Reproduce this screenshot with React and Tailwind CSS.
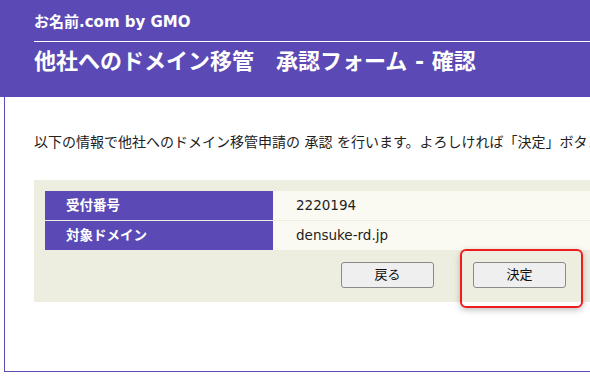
import React from 'react';

const font = { fontFamily: '"DejaVu Sans", "Noto Sans CJK JP", sans-serif' };

const rows = [
  { label: '受付番号', value: '2220194' },
  { label: '対象ドメイン', value: 'densuke-rd.jp' },
];

const App = () => {
  return (
    <div className="w-[590px] h-[381px] overflow-hidden bg-white" style={font}>
      <div className="w-[900px]">
        {/* Header */}
        <div className="h-[97px] bg-[#5b4ab5] pl-[34px] text-white">
          <div className="pt-[12px] pb-[9px] text-[15px] leading-[20px] font-bold">お名前.com by GMO</div>
          <div className="border-t border-white"></div>
          <h1 className="mt-[5px] text-[22px] leading-[30px] font-bold whitespace-nowrap">
            他社へのドメイン移管　承認フォーム - 確認
          </h1>
        </div>

        {/* Body */}
        <div className="ml-[4px] h-[275px] border-l border-b border-[#5b4ab5] pl-[29px]">
          <p className="pt-[35px] text-[14px] leading-[20px] text-[#222] whitespace-nowrap">
            以下の情報で他社へのドメイン移管申請の 承認 を行います。よろしければ「決定」ボタンを押してください。
          </p>

          <div className="mt-[28px] w-[839px] bg-[#eeeee0] px-[11px] pt-[11px] pb-[14px]">
            <div className="flex flex-col gap-[1px]">
              {rows.map((row) => (
                <div key={row.label} className="flex h-[29px]">
                  <div className="w-[228px] bg-[#5b4ab5] pl-[21px] flex items-center text-[13.5px] font-bold text-white">
                    {row.label}
                  </div>
                  <div className="flex-1 bg-[#fafaf3] pl-[23px] flex items-center text-[13.5px] text-[#222]">
                    {row.value}
                  </div>
                </div>
              ))}
            </div>

            <div className="mt-[12px] flex justify-center gap-[39px]">
              <button className="w-[93px] h-[26px] rounded-[3px] border border-[#8a8a8a] bg-[#efefef] text-[13px] text-[#111]">
                戻る
              </button>
              <div className="relative">
                <div className="absolute left-[-13px] right-[-17px] top-[-13px] bottom-[-20px] rounded-[6px] border-2 border-[#ee1c1c] shadow-[0_2px_6px_rgba(0,0,0,0.25)]"></div>
                <button className="relative w-[93px] h-[26px] rounded-[3px] border border-[#8a8a8a] bg-[#efefef] text-[13px] text-[#111]">
                  決定
                </button>
              </div>
            </div>
          </div>
        </div>
      </div>
    </div>
  );
};

export default App;
